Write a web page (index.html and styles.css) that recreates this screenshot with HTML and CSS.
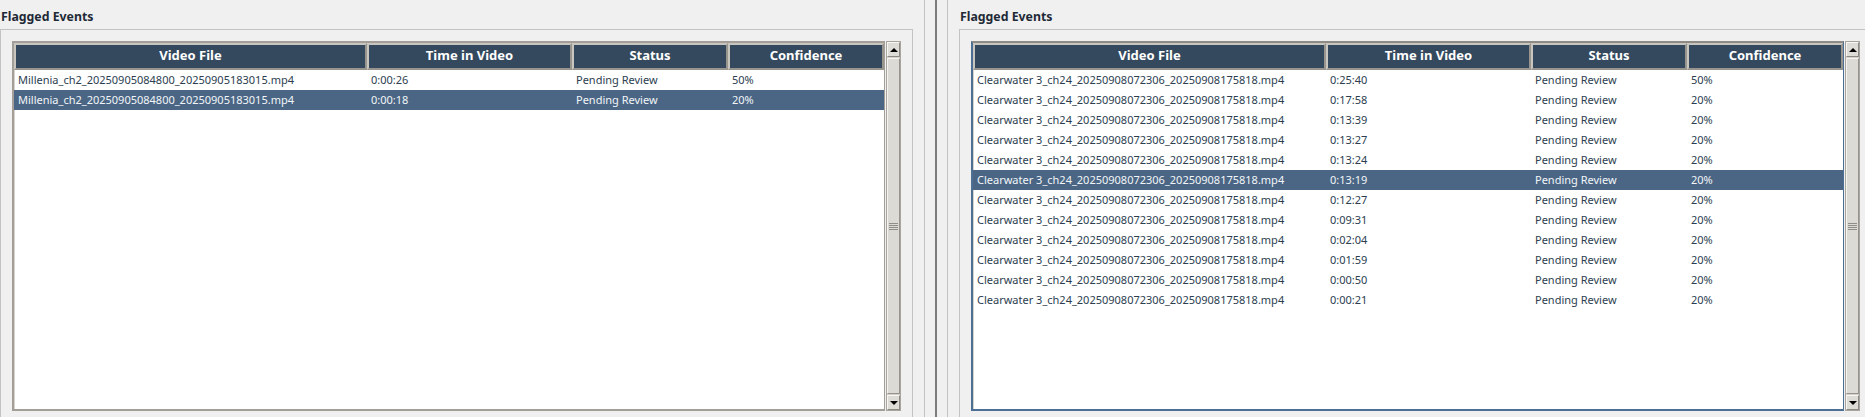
FILE: index.html
```html
<!DOCTYPE html>
<html>
<head>
<meta charset="utf-8">
<title>Flagged Events</title>
<link rel="stylesheet" href="styles.css">
</head>
<body>
<div class="app">
  <section class="pane pane-left">
    <h2 class="pane-title">Flagged Events</h2>
    <div class="group">
      <div class="table-wrap">
        <div class="viewport">
          <div class="thead">
            <div class="th">Video File</div>
            <div class="th">Time in Video</div>
            <div class="th">Status</div>
            <div class="th">Confidence</div>
          </div>
          <div class="tbody">
            <div class="tr"><div class="td">Millenia_ch2_20250905084800_20250905183015.mp4</div><div class="td">0:00:26</div><div class="td">Pending Review</div><div class="td">50%</div></div>
            <div class="tr selected"><div class="td">Millenia_ch2_20250905084800_20250905183015.mp4</div><div class="td">0:00:18</div><div class="td">Pending Review</div><div class="td">20%</div></div>
          </div>
        </div>
        <div class="scrollbar">
          <div class="sb-btn"><span class="arrow-up"></span></div>
          <div class="sb-thumb"><span class="grip"></span></div>
          <div class="sb-btn"><span class="arrow-down"></span></div>
        </div>
      </div>
    </div>
  </section>

  <div class="splitter">
    <span class="split-line"></span>
    <span class="split-line handle"></span>
    <span class="split-line"></span>
  </div>

  <section class="pane pane-right">
    <h2 class="pane-title">Flagged Events</h2>
    <div class="group">
      <div class="table-wrap">
        <div class="viewport focused">
          <div class="thead">
            <div class="th">Video File</div>
            <div class="th">Time in Video</div>
            <div class="th">Status</div>
            <div class="th">Confidence</div>
          </div>
          <div class="tbody">
            <div class="tr"><div class="td">Clearwater 3_ch24_20250908072306_20250908175818.mp4</div><div class="td">0:25:40</div><div class="td">Pending Review</div><div class="td">50%</div></div>
            <div class="tr"><div class="td">Clearwater 3_ch24_20250908072306_20250908175818.mp4</div><div class="td">0:17:58</div><div class="td">Pending Review</div><div class="td">20%</div></div>
            <div class="tr"><div class="td">Clearwater 3_ch24_20250908072306_20250908175818.mp4</div><div class="td">0:13:39</div><div class="td">Pending Review</div><div class="td">20%</div></div>
            <div class="tr"><div class="td">Clearwater 3_ch24_20250908072306_20250908175818.mp4</div><div class="td">0:13:27</div><div class="td">Pending Review</div><div class="td">20%</div></div>
            <div class="tr"><div class="td">Clearwater 3_ch24_20250908072306_20250908175818.mp4</div><div class="td">0:13:24</div><div class="td">Pending Review</div><div class="td">20%</div></div>
            <div class="tr selected"><div class="td">Clearwater 3_ch24_20250908072306_20250908175818.mp4</div><div class="td">0:13:19</div><div class="td">Pending Review</div><div class="td">20%</div></div>
            <div class="tr"><div class="td">Clearwater 3_ch24_20250908072306_20250908175818.mp4</div><div class="td">0:12:27</div><div class="td">Pending Review</div><div class="td">20%</div></div>
            <div class="tr"><div class="td">Clearwater 3_ch24_20250908072306_20250908175818.mp4</div><div class="td">0:09:31</div><div class="td">Pending Review</div><div class="td">20%</div></div>
            <div class="tr"><div class="td">Clearwater 3_ch24_20250908072306_20250908175818.mp4</div><div class="td">0:02:04</div><div class="td">Pending Review</div><div class="td">20%</div></div>
            <div class="tr"><div class="td">Clearwater 3_ch24_20250908072306_20250908175818.mp4</div><div class="td">0:01:59</div><div class="td">Pending Review</div><div class="td">20%</div></div>
            <div class="tr"><div class="td">Clearwater 3_ch24_20250908072306_20250908175818.mp4</div><div class="td">0:00:50</div><div class="td">Pending Review</div><div class="td">20%</div></div>
            <div class="tr"><div class="td">Clearwater 3_ch24_20250908072306_20250908175818.mp4</div><div class="td">0:00:21</div><div class="td">Pending Review</div><div class="td">20%</div></div>
          </div>
        </div>
        <div class="scrollbar">
          <div class="sb-btn"><span class="arrow-up"></span></div>
          <div class="sb-thumb"><span class="grip"></span></div>
          <div class="sb-btn"><span class="arrow-down"></span></div>
        </div>
      </div>
    </div>
  </section>
</div>
</body>
</html>
```
FILE: styles.css
```css
* { box-sizing: border-box; }

html, body {
  margin: 0;
  padding: 0;
  background: #f0f0f0;
  height: 417px;
  overflow: hidden;
  font-family: "Noto Sans", "Open Sans", sans-serif;
}

.app {
  display: flex;
  align-items: flex-start;
  width: 1880px;
}

.pane {
  flex: 0 0 auto;
  width: 913px;
}

.pane-title {
  margin: 0;
  height: 29px;
  padding: 9px 0 0 1px;
  font-size: 12.3px;
  line-height: 16px;
  font-weight: 700;
  color: #1e2a36;
  white-space: nowrap;
}

.group {
  border: 1px solid #c3c3c3;
  padding: 11px;
  height: 395px;
  background: #f0f0f0;
}

.table-wrap {
  display: flex;
  height: 370px;
}

.viewport {
  width: 873px;
  height: 370px;
  background: #ffffff;
  border-style: solid;
  border-width: 2px 1px 2px 2px;
  border-color: #a39f98 #a39f98 #a39f98 #a39f98;
  box-shadow: inset 1px 1px 0 #d6d3cd;
  overflow: hidden;
}

.viewport.focused {
  border-color: #8e8b85 #4d6f94 #4d6f94 #4d6f94;
}

.thead {
  display: grid;
  grid-template-columns: 353px 205px 156px 156px;
  height: 27px;
}

.th {
  background: #34495e;
  color: #ffffff;
  font-size: 13px;
  font-weight: 700;
  line-height: 21px;
  text-align: center;
  border-style: solid;
  border-width: 2px;
  border-color: #c9c6c0 #98958f #98958f #c9c6c0;
  white-space: nowrap;
  overflow: hidden;
}

.tbody {
  display: flex;
  flex-direction: column;
}

.tr {
  display: grid;
  grid-template-columns: 353px 205px 156px 156px;
  height: 20px;
  color: #2c3e50;
}

.tr.selected {
  background: #4a6684;
  color: #f2f5f8;
}

.td {
  font-size: 11px;
  line-height: 20px;
  padding-left: 4px;
  white-space: nowrap;
  overflow: hidden;
}

.scrollbar {
  width: 15px;
  margin-left: 1px;
  height: 370px;
  display: flex;
  flex-direction: column;
  background: #d4d0c8;
  border: 1px solid #a8a59f;
}

.sb-btn {
  height: 15px;
  flex: 0 0 15px;
  display: flex;
  align-items: center;
  justify-content: center;
  background: #dedcd7;
  border-style: solid;
  border-width: 1px;
  border-color: #f7f6f3 #8c8984 #8c8984 #f7f6f3;
}

.arrow-up {
  width: 0;
  height: 0;
  border-left: 4px solid transparent;
  border-right: 4px solid transparent;
  border-bottom: 4px solid #000000;
}

.arrow-down {
  width: 0;
  height: 0;
  border-left: 4px solid transparent;
  border-right: 4px solid transparent;
  border-top: 4px solid #000000;
}

.sb-thumb {
  flex: 1 1 auto;
  display: flex;
  align-items: center;
  justify-content: center;
  background: #dcdad5;
  border-style: solid;
  border-width: 1px;
  border-color: #f4f3f0 #96938e #96938e #f4f3f0;
  margin: 1px 0;
}

.grip {
  width: 9px;
  height: 7px;
  background: repeating-linear-gradient(to bottom, #8f8d88 0 1px, transparent 1px 2px);
}

.splitter {
  flex: 0 0 46px;
  width: 46px;
  height: 417px;
  display: flex;
}

.split-line {
  width: 1px;
  height: 100%;
  margin-left: 10px;
  background: #c2c2c2;
}

.split-line:first-child {
  margin-left: 11px;
}

.split-line.handle {
  width: 2px;
  background: #7c7c7c;
}

.pane-right {
  width: 914px;
}
```
